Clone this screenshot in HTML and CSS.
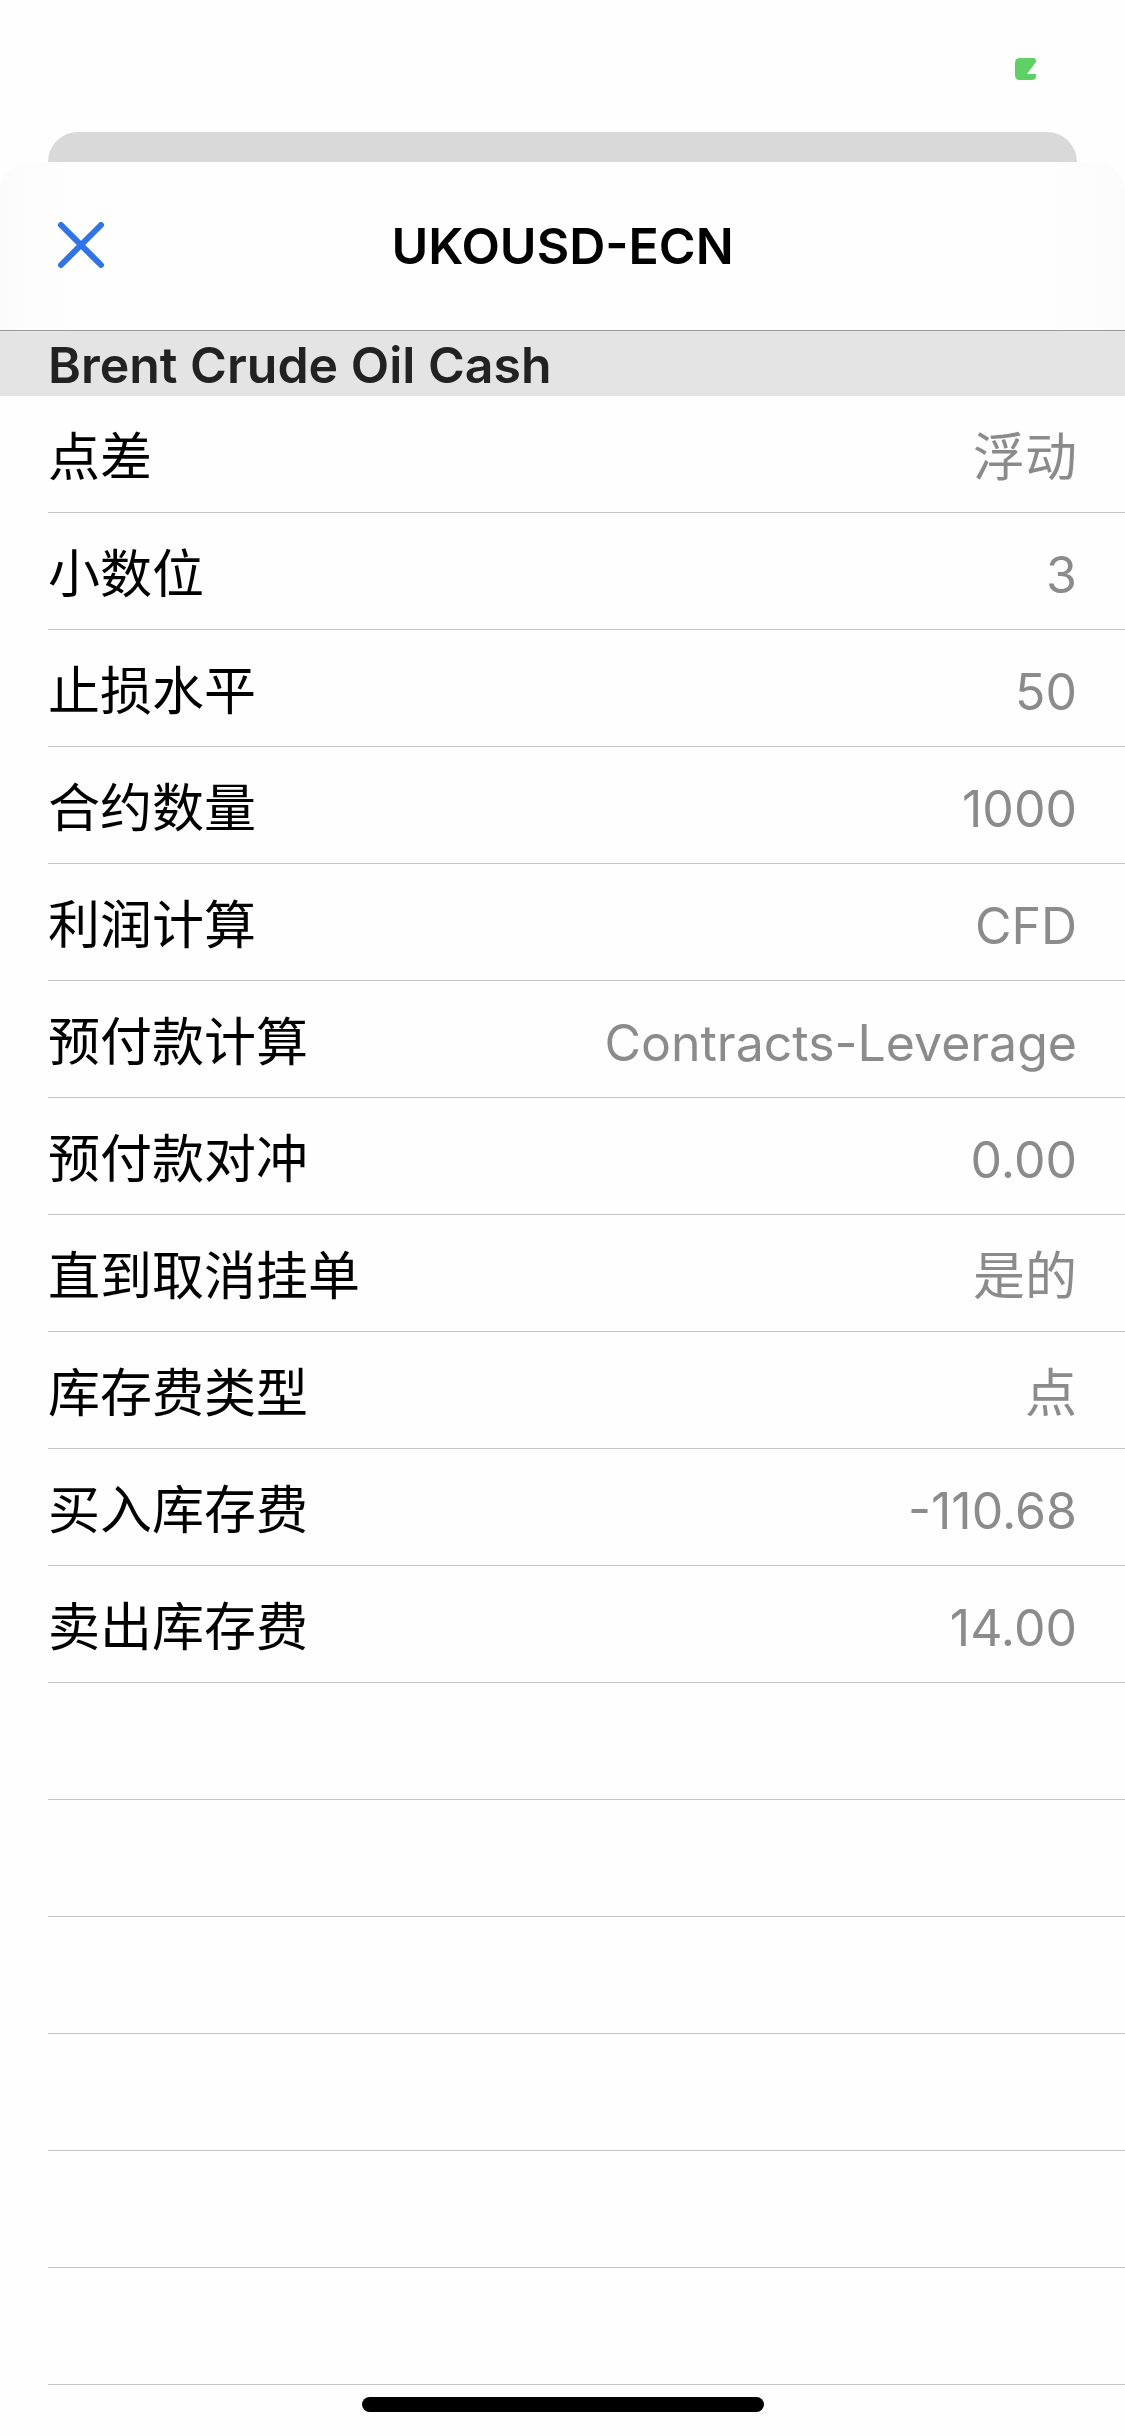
FILE: index.html
```html
<!DOCTYPE html>
<html lang="zh-CN">
<head>
<meta charset="utf-8">
<meta name="viewport" content="width=device-width, initial-scale=1">
<title>UKOUSD-ECN</title>
<link rel="stylesheet" href="styles.css">
</head>
<body>
<div class="screen">
  <div class="status-bar">
    <svg class="status-icon" viewBox="0 0 21 22" aria-hidden="true">
      <path d="M5 0H18Q21 0 21 3V4L12 16H21V18Q21 22 17 22H5Q0 22 0 17V5Q0 0 5 0Z" fill="#5fd065"/>
      <path d="M9 19.500H20" stroke="#7fae7f" stroke-width="1"/>
    </svg>
  </div>
  <div class="card-behind"></div>
  <main class="sheet">
    <header class="nav-bar">
      <button class="close" type="button" aria-label="关闭">
        <svg class="close-icon" viewBox="0 0 48 48" aria-hidden="true">
          <path d="M4 3L44 43M44 3L4 43" fill="none" stroke="#2f74ea" stroke-width="6" stroke-linecap="round"/>
        </svg>
      </button>
      <h1 class="title">UKOUSD-ECN</h1>
    </header>
    <h2 class="section-title">Brent Crude Oil Cash</h2>
    <dl class="specs">
      <div class="row"><dt>点差</dt><dd>浮动</dd></div>
      <div class="row"><dt>小数位</dt><dd class="latin">3</dd></div>
      <div class="row"><dt>止损水平</dt><dd class="latin">50</dd></div>
      <div class="row"><dt>合约数量</dt><dd class="latin">1000</dd></div>
      <div class="row"><dt>利润计算</dt><dd class="latin">CFD</dd></div>
      <div class="row"><dt>预付款计算</dt><dd class="latin">Contracts-Leverage</dd></div>
      <div class="row"><dt>预付款对冲</dt><dd class="latin">0.00</dd></div>
      <div class="row"><dt>直到取消挂单</dt><dd>是的</dd></div>
      <div class="row"><dt>库存费类型</dt><dd>点</dd></div>
      <div class="row"><dt>买入库存费</dt><dd class="latin">-110.68</dd></div>
      <div class="row"><dt>卖出库存费</dt><dd class="latin">14.00</dd></div>
    </dl>
    <div class="empty-rows"></div>
  </main>
  <div class="home-indicator"></div>
</div>
</body>
</html>
```
FILE: styles.css
```css
* {
  box-sizing: border-box;
}

body {
  margin: 0;
  background: #fefefe;
  color: #000;
  font-family: Inter, "Noto Sans CJK SC", sans-serif;
}

.screen {
  display: flex;
  flex-direction: column;
  min-height: 100vh;
}

.status-bar {
  display: flex;
  justify-content: flex-end;
  height: 132px;
  padding: 58px 89px 0;
}

.status-icon {
  width: 21px;
  height: 22px;
}

.card-behind {
  height: 30px;
  margin: 0 48px;
  border-radius: 30px 30px 0 0;
  background: #d9d9d9;
}

.sheet {
  display: flex;
  flex: 1;
  flex-direction: column;
}

.nav-bar {
  display: grid;
  grid-template-columns: 1fr auto 1fr;
  align-items: center;
  height: 169px;
  padding: 0 48px;
  border-bottom: 1px solid #9a9a9a;
  border-radius: 30px 30px 0 0;
  background: linear-gradient(90deg, #fbfbfb, #fefefe 80px, #fefefe calc(100% - 80px), #fbfbfb);
}

.close {
  display: flex;
  justify-self: start;
  padding: 9px;
  border: 0;
  background: none;
}

.close-icon {
  width: 48px;
  height: 48px;
}

.title {
  margin: 0;
  font-size: 50px;
  font-weight: 600;
  line-height: 60px;
}

.section-title {
  margin: 0;
  padding: 4px 48px 1px;
  background: #e4e4e4;
  color: #222;
  font-size: 50px;
  font-weight: 600;
  line-height: 60px;
}

.specs {
  margin: 0;
}

.row {
  display: flex;
  align-items: center;
  justify-content: space-between;
  height: 117px;
  margin-left: 48px;
  padding: 8px 48px 0 0;
  border-bottom: 1px solid #c4c4c4;
  font-size: 52px;
  line-height: 60px;
}

.row dd {
  margin: 0;
  color: #8b8b8b;
}

.row .latin {
  font-size: 50px;
}

.empty-rows {
  flex: 1;
  margin-left: 48px;
  background: repeating-linear-gradient(transparent 0 116px, #c4c4c4 116px 117px);
}

.home-indicator {
  position: fixed;
  bottom: 24px;
  left: 50%;
  width: 402px;
  height: 15px;
  margin-left: -201px;
  border-radius: 8px;
  background: #000;
}
```
